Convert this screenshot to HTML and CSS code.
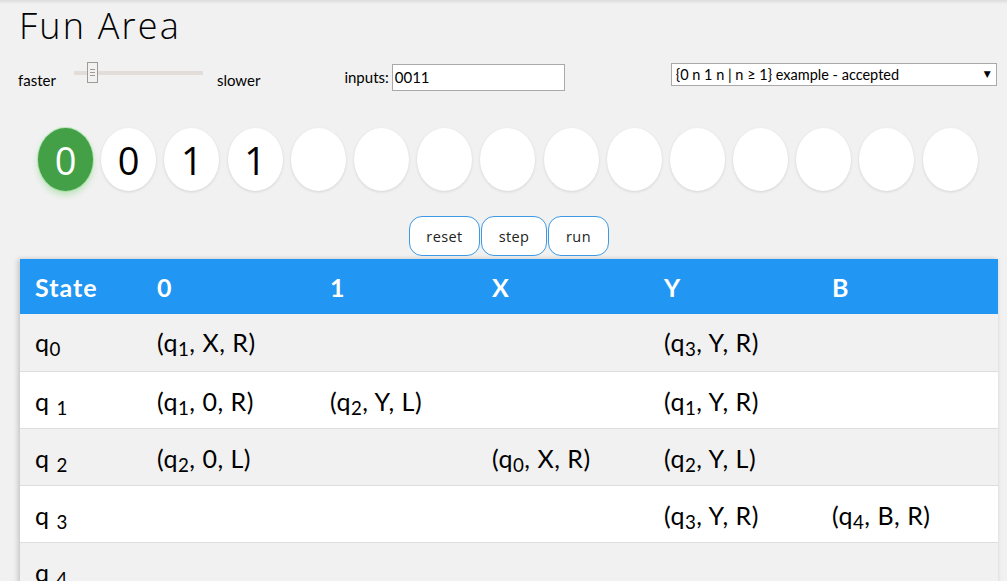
FILE: index.html
```html
<!DOCTYPE html>
<html>
<head>
<meta charset="utf-8">
<link rel="stylesheet" href="styles.css">
</head>
<body>
<div class="page">
  <h1 class="title">Fun Area</h1>
  <div class="controls">
    <span class="lbl faster">faster</span>
    <div class="slider"><div class="track"></div><div class="thumb"><i></i><i></i><i></i></div></div>
    <span class="lbl slower">slower</span>
    <label class="lbl inputs">inputs: <input class="inp" type="text" value="0011"></label>
    <div class="select"><span>{0 n 1 n | n ≥ 1} example - accepted</span><span class="arrow">▼</span></div>
  </div>
  <div class="tape">
    <div class="cell active">0</div>
    <div class="cell">0</div>
    <div class="cell">1</div>
    <div class="cell">1</div>
    <div class="cell"></div>
    <div class="cell"></div>
    <div class="cell"></div>
    <div class="cell"></div>
    <div class="cell"></div>
    <div class="cell"></div>
    <div class="cell"></div>
    <div class="cell"></div>
    <div class="cell"></div>
    <div class="cell"></div>
    <div class="cell"></div>
  </div>
  <div class="buttons">
    <button class="btn">reset</button>
    <button class="btn">step</button>
    <button class="btn">run</button>
  </div>
  <table class="tbl">
    <colgroup>
      <col class="c0"><col class="c1"><col class="c2"><col class="c3"><col class="c4"><col class="c5">
    </colgroup>
    <thead>
      <tr><th>State</th><th>0</th><th>1</th><th>X</th><th>Y</th><th>B</th></tr>
    </thead>
    <tbody>
      <tr class="grey"><td>q<sub>0</sub></td><td>(q<sub>1</sub>, X, R)</td><td></td><td></td><td>(q<sub>3</sub>, Y, R)</td><td></td></tr>
      <tr><td>q <sub>1</sub></td><td>(q<sub>1</sub>, 0, R)</td><td>(q<sub>2</sub>, Y, L)</td><td></td><td>(q<sub>1</sub>, Y, R)</td><td></td></tr>
      <tr class="grey"><td>q <sub>2</sub></td><td>(q<sub>2</sub>, 0, L)</td><td></td><td>(q<sub>0</sub>, X, R)</td><td>(q<sub>2</sub>, Y, L)</td><td></td></tr>
      <tr><td>q <sub>3</sub></td><td></td><td></td><td></td><td>(q<sub>3</sub>, Y, R)</td><td>(q<sub>4</sub>, B, R)</td></tr>
      <tr class="grey"><td>q <sub>4</sub></td><td></td><td></td><td></td><td></td><td></td></tr>
    </tbody>
  </table>
</div>
</body>
</html>
```
FILE: styles.css
```css
html, body {
  margin: 0;
  padding: 0;
  background: #f1f1f1;
  overflow: hidden;
}
body {
  font-family: "Lato", "Liberation Sans", sans-serif;
  color: #000;
  background: linear-gradient(#dcdcdc 0, #f1f1f1 4px);
  height: 581px;
}
.page {
  padding: 0 9px 0 20px;
}
.title {
  margin: 0;
  padding-top: 5px;
  height: 50px;
  font-family: "Open Sans", "Noto Sans", sans-serif;
  font-weight: 300;
  font-size: 36px;
  line-height: 42px;
  letter-spacing: 2.2px;
  margin-left: -1px;
}
.controls {
  display: flex;
  align-items: center;
  height: 30px;
  margin-top: 6px;
  margin-left: -2px;
}
.lbl {
  font-size: 15px;
}
.faster { padding-top: 7px; }
.slower { padding-top: 7px; }
.slider {
  position: relative;
  width: 129px;
  height: 22px;
  margin-left: 18px;
  margin-right: 14px;
  margin-top: -6px;
}
.track {
  position: absolute;
  left: 0; right: 0;
  top: 9px;
  height: 4px;
  background: #e2ddd8;
}
.thumb {
  position: absolute;
  left: 13px;
  top: 0;
  width: 9px;
  height: 19px;
  border: 1px solid #a09a94;
  background: #f1f1f1;
  display: flex;
  flex-direction: column;
  justify-content: center;
  align-items: center;
  gap: 2px;
}
.thumb i {
  display: block;
  width: 5px;
  height: 1px;
  background: #a09a94;
}
.inputs {
  margin-left: 84px;
  display: flex;
  align-items: center;
  gap: 3px;
  padding-top: 2px;
}
.inp {
  width: 167px;
  height: 23px;
  box-sizing: content-box;
  border: 1px solid #a9a9a9;
  padding: 1px 2px;
  font-family: "Lato", sans-serif;
  font-size: 15px;
  background: #fff;
  color: #000;
  outline: none;
}
.select {
  margin-left: 106px;
  width: 315px;
  height: 21px;
  border: 1px solid #a9a9a9;
  background: #fff;
  display: flex;
  align-items: center;
  justify-content: space-between;
  padding: 0 5px 0 4px;
  font-size: 14.5px;
  margin-top: -4px;
}
.arrow {
  font-size: 9px;
  font-family: "DejaVu Sans", sans-serif;
}
.tape {
  display: flex;
  gap: 8.2px;
  margin-top: 37px;
  margin-left: 18px;
  height: 63px;
}
.cell {
  width: 55px;
  height: 63px;
  flex: none;
  background: #fff;
  border-radius: 50%;
  box-shadow: 0 1px 3px rgba(0,0,0,0.12);
  display: flex;
  align-items: center;
  justify-content: center;
  font-family: "Open Sans", "Noto Sans", sans-serif;
  font-size: 38px;
  font-weight: 400;
}
.cell.active {
  background: #43a047;
  color: #fff;
  box-shadow: 0 0 0 1px rgba(140,220,140,0.5), 0 4px 6px rgba(120,210,120,0.45);
}
.buttons {
  display: flex;
  justify-content: center;
  gap: 1px;
  margin-top: 25px;
  padding-left: 0;
}
.btn {
  height: 40px;
  padding: 0;
  border: 1px solid #3d99e6;
  border-radius: 13px;
  background: #fff;
  font-family: "Open Sans", "Noto Sans", sans-serif;
  font-size: 14.5px;
  color: #222;
  letter-spacing: 0.4px;
}
.btn:first-child { width: 71px; }
.btn:nth-child(2) { width: 66px; }
.btn:nth-child(3) { width: 61px; }
.tbl {
  margin-top: 3px;
  width: 978px;
  border-collapse: collapse;
  box-shadow: -3px 0 5px rgba(0,0,0,0.12), 0 0 4px rgba(0,0,0,0.1);
  font-size: 25px;
  letter-spacing: 0.5px;
}
.c0 { width: 125px; }
.c1 { width: 173px; }
.c2 { width: 162px; }
.c3 { width: 172px; }
.c4 { width: 168px; }
.c5 { width: 178px; }
.tbl th {
  background: #2196f3;
  color: #fff;
  font-size: 25px;
  font-weight: 700;
  letter-spacing: 1px;
  text-align: left;
  height: 55px;
  padding: 0 12px;
  box-sizing: border-box;
}
.tbl th:first-child { padding-left: 15px; }
.tbl td {
  height: 57px;
  box-sizing: border-box;
  padding: 2px 12px 0 12px;
  border-bottom: 1px solid #ddd;
  background: #fff;
  white-space: nowrap;
}
.tbl td:first-child { padding-left: 15px; }
.tbl tr.grey td { background: #f1f1f1; }
.tbl tbody tr:first-child td { padding-top: 0; }
sub {
  font-size: 75%;
  vertical-align: -0.22em;
  line-height: 0;
}
```
